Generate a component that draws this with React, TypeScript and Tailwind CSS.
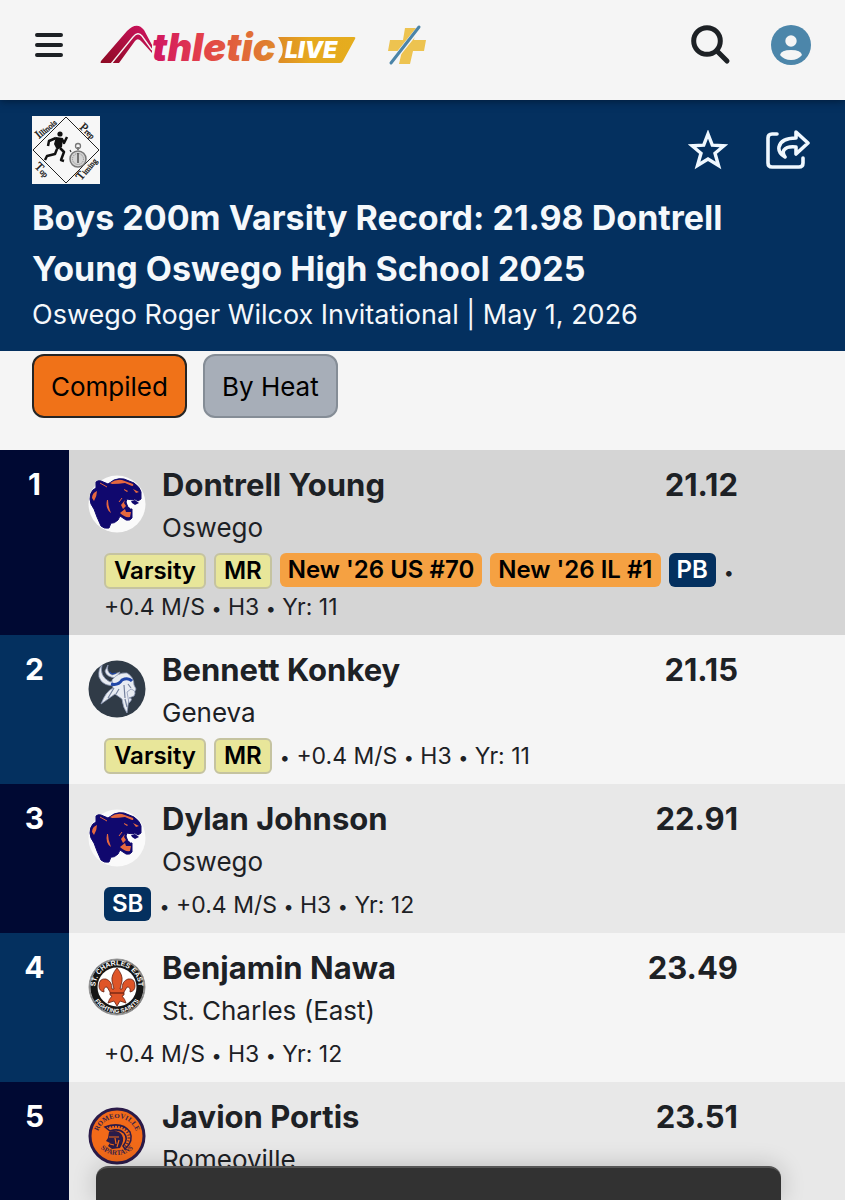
import type { ReactNode } from 'react';
import clsx from 'clsx';

type Tag = { label: string; kind: 'division' | 'ranking' | 'best' };

type Result = {
  place: number;
  name: string;
  school: string;
  time: string;
  tags: Tag[];
  details: string[];
  logo: ReactNode;
};

function MenuIcon() {
  return (
    <svg viewBox="0 0 28 26" className="h-[26px] w-7" stroke="#1d2125" strokeWidth="4" strokeLinecap="round">
      <path d="M2 3H26M2 13H26M2 23H26" />
    </svg>
  );
}

function AthleticLogo() {
  return (
    <svg viewBox="0 0 256 46" className="h-[46px] w-64 overflow-visible" role="img" aria-label="Athletic Live">
      <defs>
        <linearGradient id="word" gradientUnits="userSpaceOnUse" x1="50" y1="0" x2="178" y2="0">
          <stop offset="0" stopColor="#cf1263" />
          <stop offset="0.4" stopColor="#e3404a" />
          <stop offset="1" stopColor="#df8a2b" />
        </linearGradient>
        <linearGradient id="mark" x1="0" y1="1" x2="1" y2="0">
          <stop offset="0" stopColor="#8c0a22" />
          <stop offset="1" stopColor="#cf1360" />
        </linearGradient>
        <linearGradient id="live" x1="0" y1="0" x2="1" y2="0">
          <stop offset="0" stopColor="#de8b26" />
          <stop offset="0.4" stopColor="#e6a81f" />
          <stop offset="1" stopColor="#e5ad1e" />
        </linearGradient>
      </defs>
      <path fill="url(#mark)" d="M1 41Q0 41 1 39L27 9Q37-1 44 8L52 23V31L42 20Q38 15 35 19L19 41Z" />
      <path fill="none" stroke="#f5f5f5" strokeWidth="1.300" d="M11 42L33 15Q38 9 42 14L52 28" />
      <text x="52" y="39" fontSize="38" fontWeight="900" fontStyle="italic" fontFamily="Inter, sans-serif" fill="url(#word)">
        thletic
      </text>
      <path fill="url(#live)" d="M178 15H254Q256 15 255 17L243 39Q242 41 240 41H180Q177 41 179 38Q187 28 178 15Z" />
      <text x="185" y="36" fontSize="23" fontWeight="900" fontStyle="italic" fontFamily="Inter, sans-serif" fill="#fff">
        LIVE
      </text>
    </svg>
  );
}

function PlusIcon() {
  return (
    <svg viewBox="0 0 40 42" className="h-[42px] w-10">
      <path fill="#edc350" d="M17 4H28L26 16H38L36 27H25L22 40H11L14 27H0L2 16H15Z" />
      <path stroke="#f5f5f5" strokeWidth="5" d="M3 39L32 3" />
      <path stroke="#4b84a8" strokeWidth="3" strokeLinecap="round" d="M3 39L31 3" />
    </svg>
  );
}

function SearchIcon() {
  return (
    <svg viewBox="0 0 40 40" className="size-10" fill="none" stroke="#1d2125" strokeLinecap="round">
      <circle cx="16" cy="16" r="13.300" strokeWidth="5" />
      <path strokeWidth="5" d="M26 26L36 36" />
    </svg>
  );
}

function UserIcon() {
  return (
    <svg viewBox="0 0 40 40" className="size-10">
      <circle cx="20" cy="20" r="20" fill="#4c86aa" />
      <circle cx="20" cy="16" r="5.700" fill="#f5f5f5" />
      <path fill="#f5f5f5" d="M9 30Q10 25 20 25T31 30Q27 35 20 35T9 30Z" />
    </svg>
  );
}

function StarIcon() {
  return (
    <svg viewBox="0 0 40 40" className="size-10" fill="none" stroke="#f0f8ff" strokeWidth="3.400">
      <path d="M20 4L24.300 15.200L36 15.700L27 23.300L30.500 35.500L20 29L9.500 35.500L13 23.300L4 15.700L15.700 15.200Z" />
    </svg>
  );
}

function ShareIcon() {
  return (
    <svg viewBox="0 0 44 40" className="h-10 w-11" fill="none" stroke="#f0f8ff" strokeWidth="3.600" strokeLinecap="round" strokeLinejoin="round">
      <path d="M11 4H6Q2 4 2 8V33Q2 37 6 37H33Q37 37 37 33V28" />
      <path d="M30 2L42 13L30 24V17Q21 16 18 20Q16 23 19 27Q12 23 13 17Q15 8 30 8Z" />
    </svg>
  );
}

function TimingLogo() {
  return (
    <svg viewBox="0 0 68 68" className="size-[68px]" role="img" aria-label="Illinois Prep Top Timing">
      <path fill="#f7f7f7" d="M0 0H68V68H0Z" />
      <path fill="none" stroke="#222" d="M34 1L67 34L34 67L1 34Z" />
      <g fontFamily="Liberation Serif, serif" fontSize="8" fill="#111" stroke="#111" strokeWidth="0.300">
        <text transform="translate(7 23) rotate(-40)"><tspan fontSize="12">I</tspan>llinois</text>
        <text transform="translate(47 12) rotate(42)"><tspan fontSize="12">P</tspan>rep</text>
        <text transform="translate(2 51) rotate(45)"><tspan fontSize="12">T</tspan>op</text>
        <text transform="translate(49 65) rotate(-50)"><tspan fontSize="12">T</tspan>iming</text>
      </g>
      <circle cx="28" cy="18" r="2.600" fill="#111" />
      <path fill="#111" d="M24 21L31 22L30 31L25 34L22 28Z" />
      <path
        fill="none"
        stroke="#111"
        strokeWidth="2.500"
        strokeLinejoin="round"
        d="M24 22L17 25L16 30M30 23L32 27L35 21M25 33L23 38L15 40L13 44M28 32L32 36L29 44L32 45"
      />
      <circle cx="46" cy="43" r="8" fill="#d4d4d4" stroke="#777" strokeWidth="1.500" />
      <circle cx="46" cy="43" r="5.500" fill="none" stroke="#888" strokeDasharray="1 1" />
      <path stroke="#333" strokeWidth="1.200" d="M46 47V37M46 34V31M39 36L38 34" />
      <circle cx="46" cy="30" r="2.500" fill="none" stroke="#777" strokeWidth="1.300" />
    </svg>
  );
}

function OswegoLogo() {
  return (
    <svg viewBox="0 0 58 58" className="size-[58px]">
      <circle cx="29" cy="29" r="28.500" fill="#fafafa" />
      <path
        fill="#10086e"
        stroke="#10086e"
        strokeLinejoin="round"
        d="M8 13L8 7Q10 5 13 6L20 9L26 5Q31 3 36 4L46 8Q52 12 53 17V24L50 26L47 24L44 25L39 24L38 27L40 32L44 34L44 43Q42 46 38 45L32 41L30 45Q26 49 23 48L21 53Q16 54 13 51L9 42L6 34Q2 29 2 24Q2 18 5 15Z"
      />
      <g fill="#e5683f">
        <path d="M22 8Q28 4 34 5L45 9Q46 11 44 11L37 8Q31 9 24 9ZM4 23Q4 18 9 16Q9 21 6 26ZM19 25Q17 34 23 38Q20 31 20 25Z" />
        <path d="M45 14L51 17L48 18ZM36 14L40 16L39 17L36 15ZM33 30L37 25L36 28L38 31L35 34ZM32 38L37 34L38 37L43 37L42 42Q37 43 32 38Z" />
      </g>
      <path fill="none" stroke="#e5683f" d="M12 8L19 12M31 27L34 23" />
      <path fill="#fff" d="M39 26L45 25L51 27L49 30L46 30L43 34L40 31Z" />
      <path fill="#10086e" d="M43 26L47 25L51 28L47 30L44 28Z" />
    </svg>
  );
}

function GenevaLogo() {
  return (
    <svg viewBox="0 0 58 58" className="size-[58px]">
      <circle cx="29" cy="29" r="28.500" fill="#303b47" />
      <g fill="#e8ecf2" stroke="#8d98b5" strokeWidth="0.800" strokeLinejoin="round">
        <path d="M14 5Q11 16 22 22L33 18L30 25Q15 28 11 17Q10 9 14 5Z" />
        <path d="M20 5Q18 12 24 15L32 12L28 18Q18 17 17 11Z" />
        <path d="M24 20Q30 12 39 13Q46 17 46 25L48 29L46 33L42 31L39 53Q35 48 34 39L27 34L13 44Q18 31 25 28Z" />
        <path d="M43 29Q49 31 46 36L41 38Q46 38 41 43L39 32Z" />
      </g>
      <path fill="none" stroke="#2147a8" strokeWidth="3" d="M23 24Q30 26 34 20Q40 17 44 21" />
      <path fill="none" stroke="#75829e" strokeWidth="1.200" d="M26 28L20 38M31 29L28 34M36 25L37 38M40 24L43 28M37 39L39 47" />
      <path fill="none" stroke="#2147a8" strokeWidth="1.200" d="M22 12Q23 15 28 13" />
    </svg>
  );
}

function StCharlesLogo() {
  return (
    <svg viewBox="0 0 58 58" className="size-[58px]">
      <defs>
        <path id="saints-top" d="M10 39A21.500 21.500 0 1 1 48 39" />
        <path id="saints-bottom" d="M3.500 34A26 26 0 0 0 54.500 34" />
      </defs>
      <circle cx="29" cy="29" r="28" fill="#161616" stroke="#999" />
      <circle cx="29" cy="29" r="27" fill="none" stroke="#ddd" strokeWidth="0.700" />
      <circle cx="29" cy="29" r="19.500" fill="#fff" />
      <g fill="#fff" fontFamily="Liberation Sans, sans-serif" fontWeight="700">
        <text fontSize="7">
          <textPath href="#saints-top" startOffset="50%" textAnchor="middle">ST. CHARLES EAST</textPath>
        </text>
        <text fontSize="6">
          <textPath href="#saints-bottom" startOffset="50%" textAnchor="middle">FIGHTING SAINTS</textPath>
        </text>
      </g>
      <path
        fill="#df5528"
        stroke="#641f10"
        strokeWidth="0.800"
        d="M29 10Q35 17 34 23L32 31H34Q34 23 40 21Q47 20 47 28Q47 33 42 34Q43 29 39 29L36 34V37L34 38Q37 41 38 45L32 43L29 48L26 43L20 45Q21 41 24 38L22 37V34L19 29Q15 29 16 34Q11 33 11 28Q11 20 18 21Q24 23 24 31H26L24 23Q23 17 29 10Z"
      />
      <path stroke="#641f10" strokeWidth="1.200" d="M22 35H36" />
    </svg>
  );
}

function RomeovilleLogo() {
  return (
    <svg viewBox="0 0 58 58" className="size-[58px]">
      <defs>
        <path id="spartans-top" d="M9 31A20 20 0 0 1 49 31" />
        <path id="spartans-bottom" d="M8 36A24.500 24.500 0 0 0 50 36" />
      </defs>
      <circle cx="29" cy="29" r="27" fill="#f26a19" stroke="#2b1b49" strokeWidth="3" />
      <g fill="#38234a" fontFamily="Liberation Serif, serif" fontWeight="700" fontSize="7">
        <text>
          <textPath href="#spartans-top" startOffset="50%" textAnchor="middle">ROMEOVILLE</textPath>
        </text>
        <text>
          <textPath href="#spartans-bottom" startOffset="50%" textAnchor="middle">SPARTANS</textPath>
        </text>
      </g>
      <path fill="none" stroke="#2b1b49" strokeWidth="1.500" d="M17 20Q34 14 42 25Q46 34 37 42L35 39Q41 32 36 26Q31 21 22 24Z" />
      <path fill="none" stroke="#2b1b49" strokeWidth="2.500" strokeDasharray="1 2" d="M20 20Q35 17 40 26Q43 34 36 41" />
      <path fill="#2b1b49" d="M21 25Q30 22 34 28Q37 33 32 41L24 42L20 39L22 36L18 34L20 31Z" />
      <path stroke="#f26a19" strokeWidth="1.200" d="M21 30H31M27 31L28 37M22 37L26 38M31 33L29 40" />
    </svg>
  );
}

const results: Result[] = [
  {
    place: 1,
    name: 'Dontrell Young',
    school: 'Oswego',
    time: '21.12',
    tags: [
      { label: 'Varsity', kind: 'division' },
      { label: 'MR', kind: 'division' },
      { label: "New '26 US #70", kind: 'ranking' },
      { label: "New '26 IL #1", kind: 'ranking' },
      { label: 'PB', kind: 'best' },
    ],
    details: ['+0.4 M/S', 'H3', 'Yr: 11'],
    logo: <OswegoLogo />,
  },
  {
    place: 2,
    name: 'Bennett Konkey',
    school: 'Geneva',
    time: '21.15',
    tags: [
      { label: 'Varsity', kind: 'division' },
      { label: 'MR', kind: 'division' },
    ],
    details: ['+0.4 M/S', 'H3', 'Yr: 11'],
    logo: <GenevaLogo />,
  },
  {
    place: 3,
    name: 'Dylan Johnson',
    school: 'Oswego',
    time: '22.91',
    tags: [{ label: 'SB', kind: 'best' }],
    details: ['+0.4 M/S', 'H3', 'Yr: 12'],
    logo: <OswegoLogo />,
  },
  {
    place: 4,
    name: 'Benjamin Nawa',
    school: 'St. Charles (East)',
    time: '23.49',
    tags: [],
    details: ['+0.4 M/S', 'H3', 'Yr: 12'],
    logo: <StCharlesLogo />,
  },
  {
    place: 5,
    name: 'Javion Portis',
    school: 'Romeoville',
    time: '23.51',
    tags: [],
    details: [],
    logo: <RomeovilleLogo />,
  },
];

const tagStyles = {
  division: 'h-9 border-2 border-[#c5c3a0] bg-[#e8e69a] text-black',
  ranking: 'h-[34px] bg-[#f5a142] text-black',
  best: 'h-[34px] bg-[#04305f] text-white',
};

function ResultRow({ result }: { result: Result }) {
  const odd = result.place % 2 === 1;
  return (
    <li
      className={clsx(
        'flex min-h-[149px]',
        result.place === 1 ? 'bg-[#d5d5d5]' : odd ? 'bg-[#e8e8e8]' : 'bg-[#f5f5f5]',
      )}
    >
      <div
        className={clsx(
          'w-[69px] shrink-0 pt-[13px] text-center text-[30px] leading-[43px] font-bold text-white',
          odd ? 'bg-[#000933]' : 'bg-[#04305f]',
        )}
      >
        {result.place}
      </div>
      <div className="flex-1 pt-[13px] pr-[100px] pl-[19px]">
        <div className="flex">
          <div className="w-[74px] shrink-0 pt-3">{result.logo}</div>
          <div className="flex-1">
            <h2 className="text-[31px] leading-[43px] font-bold">{result.name}</h2>
            <p className="text-[26px] leading-[43px]">{result.school}</p>
          </div>
          <div className="pr-[7px] text-[31px] leading-[43px] font-bold">{result.time}</div>
        </div>
        <div className="mt-1 pb-[10px] pl-4 text-[23px] leading-9">
          {result.tags.map((tag) => (
            <span
              key={tag.label}
              className={clsx(
                'mr-2 inline-flex items-center rounded-md px-2 align-top text-2xl leading-8 font-semibold',
                tagStyles[tag.kind],
              )}
            >
              {tag.label}
            </span>
          ))}
          {result.details.map((detail, index) => (
            <span key={detail}>
              {index > 0 && ' '}
              {(index > 0 || result.tags.length > 0) && (
                <>
                  <span className="text-lg">•</span>{' '}
                </>
              )}
              {detail}
            </span>
          ))}
        </div>
      </div>
    </li>
  );
}

export default function App() {
  return (
    <div className="flex h-screen flex-col overflow-hidden bg-[#f5f5f5] font-[Inter,sans-serif] text-[#1d2125]">
      {/* Top bar */}
      <header className="relative z-10 flex h-[100px] shrink-0 items-center bg-[#f5f5f5] pr-[34px] pb-[10px] pl-[35px] shadow-[0_1px_8px_#021b38]">
        <button type="button" aria-label="Menu">
          <MenuIcon />
        </button>
        <a href="#" className="ml-[37px]">
          <AthleticLogo />
        </a>
        <a href="#" aria-label="Athletic plus" className="ml-8">
          <PlusIcon />
        </a>
        <button type="button" aria-label="Search" className="ml-auto">
          <SearchIcon />
        </button>
        <button type="button" aria-label="Account" className="ml-10">
          <UserIcon />
        </button>
      </header>

      {/* Event banner */}
      <section className="shrink-0 bg-[#04305f] px-8 pt-4 pb-4 text-[#f5f8fb]">
        <div className="flex items-start">
          <TimingLogo />
          <div className="mt-[14px] ml-auto flex gap-[38px] pr-[3px]">
            <button type="button" aria-label="Favorite">
              <StarIcon />
            </button>
            <button type="button" aria-label="Share">
              <ShareIcon />
            </button>
          </div>
        </div>
        <h1 className="mt-2 text-[34px] leading-[51px] font-bold">
          Boys 200m Varsity Record: 21.98 Dontrell Young Oswego High School 2025
        </h1>
        <p className="text-[27px] leading-[41px]">Oswego Roger Wilcox Invitational | May 1, 2026</p>
      </section>

      {/* Result view */}
      <div className="flex shrink-0 gap-4 px-8 pt-[3px] pb-8 text-[26px] text-black">
        <button type="button" className="h-16 rounded-xl border-2 border-[#252525] bg-[#f07218] px-[17px]">
          Compiled
        </button>
        <button type="button" className="h-16 rounded-xl border-2 border-[#858d96] bg-[#a7aeb8] px-[17px]">
          By Heat
        </button>
      </div>

      {/* Results */}
      <ol className="flex-1 overflow-hidden">
        {results.map((result) => (
          <ResultRow key={result.place} result={result} />
        ))}
      </ol>

      <div className="fixed right-16 bottom-0 left-24 h-[34px] rounded-t-xl border-t-2 border-[#555] bg-[#323232] shadow-[0_0_24px_rgba(0,0,0,0.2)]" />
    </div>
  );
}
